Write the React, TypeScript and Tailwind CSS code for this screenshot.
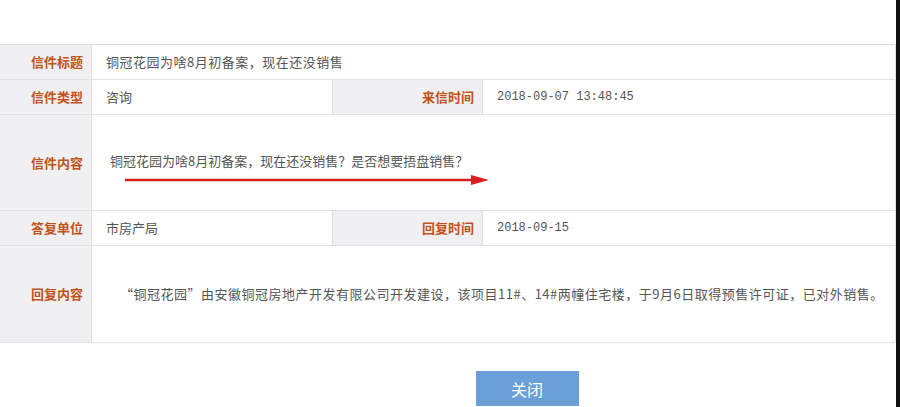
import React from "react";

const cjk = { fontFamily: '"Noto Sans CJK SC", "Microsoft YaHei", sans-serif' };
const mono = { fontFamily: '"Liberation Mono", "Noto Sans CJK SC", monospace' };

function Label({ children, tall = false }: { children: React.ReactNode; tall?: boolean }) {
  return (
    <div
      className={`flex items-center justify-end pr-[8px] bg-[#f0f0f2] border-b border-r border-[#e2e2e4] text-[13px] font-bold text-[#c2521a] ${tall ? "" : "h-[35px]"}`}
      style={cjk}
    >
      {children}
    </div>
  );
}

function Value({ children, className = "", font = cjk }: { children: React.ReactNode; className?: string; font?: React.CSSProperties }) {
  return (
    <div
      className={`flex items-center pl-[14px] bg-white border-b border-r border-[#e2e2e4] text-[13px] text-[#555] ${className}`}
      style={font}
    >
      {children}
    </div>
  );
}

export default function App() {
  return (
    <div className="flex w-[900px] h-[407px] bg-white overflow-hidden">
      <div className="w-[896px] flex flex-col">
        <div className="h-[44px]" />
        <div className="grid grid-cols-[92px_241px_150px_1fr] border-t border-[#dcdcde]">
          <Label>信件标题</Label>
          <Value className="col-span-3 h-[35px] tracking-[0.5px]">铜冠花园为啥8月初备案，现在还没销售</Value>

          <Label>信件类型</Label>
          <Value className="h-[35px]">咨询</Value>
          <Label>来信时间</Label>
          <Value className="h-[35px]" font={mono}>
            <span className="text-[12px]">2018-09-07 13:48:45</span>
          </Value>

          <Label tall>信件内容</Label>
          <div
            className="col-span-3 relative h-[96px] flex items-center pl-[18px] bg-white border-b border-r border-[#e2e2e4] text-[13px] text-[#555]"
            style={cjk}
          >
            <span className="-mt-[4px]">铜冠花园为啥8月初备案，现在还没销售？是否想要捂盘销售？</span>
            <svg className="absolute left-[33px] top-[59px]" width="364" height="12" viewBox="0 0 364 12">
              <line x1="0" y1="6" x2="350" y2="6" stroke="#d81e1e" strokeWidth="2.5" strokeLinecap="round" />
              <polygon points="346,1 364,6 346,11" fill="#d81e1e" />
            </svg>
          </div>

          <Label>答复单位</Label>
          <Value className="h-[35px]">市房产局</Value>
          <Label>回复时间</Label>
          <Value className="h-[35px]" font={mono}>
            <span className="text-[12px]">2018-09-15</span>
          </Value>

          <Label tall>回复内容</Label>
          <div
            className="col-span-3 h-[97px] flex items-center pl-[28px] bg-white border-b border-r border-[#e2e2e4] text-[13px] text-[#555] whitespace-nowrap tracking-[0.5px]"
            style={cjk}
          >
            “铜冠花园”由安徽铜冠房地产开发有限公司开发建设，该项目11#、14#两幢住宅楼，于9月6日取得预售许可证，已对外销售。
          </div>
        </div>
        <div className="flex justify-center pt-[28px] pl-[158px]">
          <button
            className="w-[103px] h-[35px] bg-[#6a9fd8] text-white text-[16px] flex items-center justify-center"
            style={cjk}
          >
            关闭
          </button>
        </div>
      </div>
      <div className="w-[4px] bg-[#111]" />
    </div>
  );
}
